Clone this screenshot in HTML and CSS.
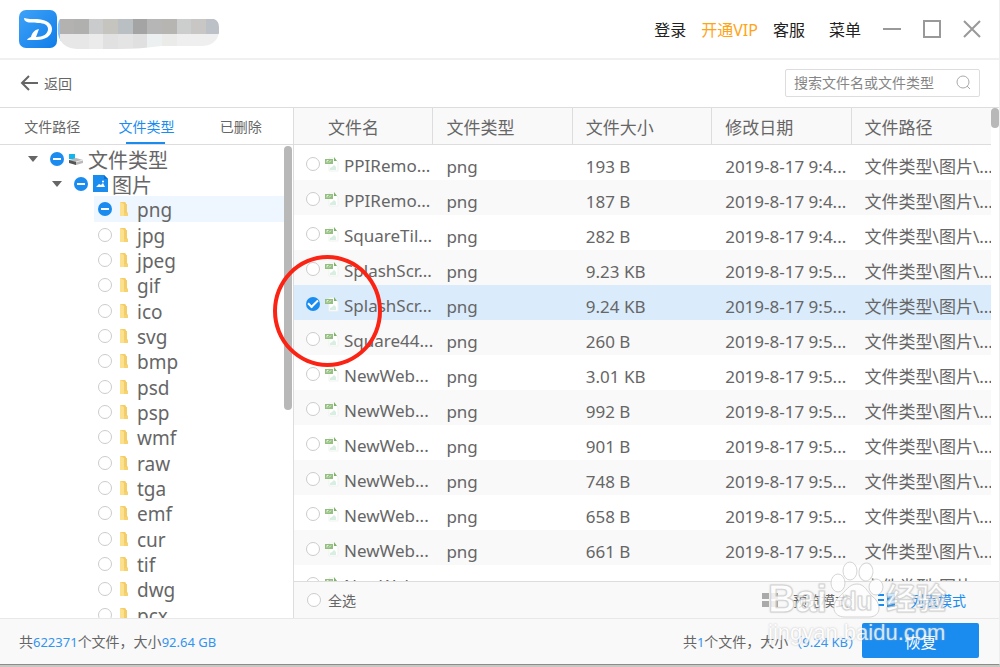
FILE: index.html
```html
<!DOCTYPE html>
<html lang="zh-CN">
<head>
  <meta charset="UTF-8">
  <title>数据恢复</title>
  <link rel="stylesheet" href="styles.css">
</head>
<body>
  <!-- icons used more than once -->
  <svg class="sprite" aria-hidden="true">
    <symbol id="i-folder" viewBox="0 0 10 16">
      <path d="M1 1h5l1 1v1h1v8l1 1v3H1z" fill="#f3cd68"/>
      <path d="M1 1l4 2v12H1z" fill="#fbe08e"/>
      <path d="M5 12h4v3H5z" fill="#f7d271"/>
    </symbol>
    <symbol id="i-png" viewBox="0 0 14 15">
      <path d="M4 1h5l4 4v9H4z" fill="#fff" stroke="#eef3ee"/>
      <path d="M9 0l3 4H9z" fill="#7fb26c"/>
      <path d="M0 2h8v5H0z" fill="#94bf80"/>
      <path d="M2 5.500V3.500h1.500M4 5.500l2-2" stroke="#e6f3df" fill="none"/>
      <path d="M5 13v-2l2-1 2-2 2 2v3z" fill="#d9eee2"/>
    </symbol>
  </svg>

  <div class="window">
    <header class="titlebar">
      <svg class="logo" viewBox="0 0 38 38">
        <defs>
          <linearGradient id="lg" x1="0" y1="0" x2="1" y2="1">
            <stop offset="0" stop-color="#3ea2f8"/>
            <stop offset="1" stop-color="#0f7ce8"/>
          </linearGradient>
        </defs>
        <rect width="38" height="38" rx="7" fill="url(#lg)"/>
        <path d="M5 8c3 1 8 1 13 1 11 1 15 5 15 10 0 7-7 11-15 11H8c1-2 2-2 4-3 1-4 3-7 8-8l-3 8c7 0 12-3 12-8 0-4-4-6-10-6-5-1-9 0-11-1-2-1-3-2-3-4z" fill="#fff"/>
      </svg>
      <svg class="brand" viewBox="0 0 162 30">
        <clipPath id="brandclip"><path d="M3 0h154q5 2 5 8v6q-3 13-18 13h-40q-20 3-42 3H20Q4 29 1 15 0 3 3 0z"/></clipPath>
        <g clip-path="url(#brandclip)">
          <path fill="#8dc2f5" d="M0 0h4v30H0z"/>
          <path fill="#b3b2b1" d="M3 0h14v15H3z"/><path fill="#b0b0af" d="M17 0h15v15H17z"/>
          <path fill="#c9cbcd" d="M32 0h14v15H32z"/><path fill="#c5c4bf" d="M46 0h15v15H46z"/>
          <path fill="#b9bfc3" d="M61 0h15v15H61z"/><path fill="#a4a4a4" d="M76 0h14v15H76z"/>
          <path fill="#b6b6b6" d="M90 0h15v15H90z"/><path fill="#b7b5b2" d="M105 0h15v15h-15z"/>
          <path fill="#cccdcd" d="M120 0h14v15h-14z"/><path fill="#c9c7c5" d="M134 0h15v15h-15z"/>
          <path fill="#bbc1c6" d="M149 0h13v15h-13z"/>
          <path fill="#e7e7e7" d="M3 15h29v15H3z"/><path fill="#ebebeb" d="M32 15h14v15H32z"/>
          <path fill="#e1e1e1" d="M46 15h15v15H46z"/><path fill="#e4e4e4" d="M61 15h15v15H61z"/>
          <path fill="#e0e0e0" d="M76 15h14v15H76z"/><path fill="#edf0f0" d="M90 15h15v15H90z"/>
          <path fill="#ebebea" d="M105 15h15v15h-15z"/><path fill="#efefef" d="M120 15h42v15h-42z"/>
        </g>
      </svg>
      <nav class="menu">
        <a href="#">登录</a>
        <a href="#" class="vip">开通VIP</a>
        <a href="#">客服</a>
      </nav>
      <div class="winbtns">
        <button class="menubtn">菜单</button>
        <button aria-label="最小化"><svg width="18" height="18"><path d="M0 9h18" stroke-width="2"/></svg></button>
        <button aria-label="最大化"><svg width="18" height="18"><path d="M1 1h16v16H1z" stroke-width="2"/></svg></button>
        <button aria-label="关闭"><svg width="18" height="18"><path d="M1 1l16 16M17 1L1 17" stroke-width="2"/></svg></button>
      </div>
    </header>

    <div class="toolbar">
      <button class="back">
        <svg width="18" height="16"><path d="M9 1L2 8l7 7M2 8h16" stroke="#666" stroke-width="2" fill="none"/></svg>
        返回
      </button>
      <div class="search">
        <input type="text" placeholder="搜索文件名或文件类型" aria-label="搜索">
        <svg width="15" height="15"><circle cx="7" cy="7" r="6"/><path d="M11 11l3 3"/></svg>
      </div>
    </div>

    <div class="main">
      <aside class="side">
        <div class="tabs">
          <button class="tab">文件路径</button>
          <button class="tab active">文件类型</button>
          <button class="tab">已删除</button>
        </div>
        <div class="tree-wrap">
          <ul class="tree" id="tree">
            <li class="lv1">
              <span class="arrow"></span>
              <input type="checkbox" class="check part" id="t-all">
              <svg class="ico-disk" viewBox="0 0 15 12"><path d="M0 1h6v5H0z" fill="#13b5ee"/><path d="M0 7l7-2 7 2v3l-7 2-7-3z" fill="#b9b9b9"/><path d="M0 7l7 2v3l-7-2z" fill="#555"/><path d="M7 9l7-2" stroke="#eee"/></svg>
              <label for="t-all">文件类型</label>
            </li>
            <li class="lv2">
              <span class="arrow"></span>
              <input type="checkbox" class="check part" id="t-pic">
              <svg class="ico-pic" viewBox="0 0 15 17"><path d="M0 0h11l4 4v13H0z" fill="#1a8cf0"/><path d="M11 0v4h4z" fill="#0c6fc9"/><path d="M3 12l3-3 2 1 2-2 2 4z" fill="#fff"/><circle cx="10" cy="6.500" r="1" fill="#fff"/></svg>
              <label for="t-pic">图片</label>
            </li>
          </ul>
          <div class="rail"><div class="thumb"></div></div>
        </div>
      </aside>

      <section class="files">
        <div class="list">
          <div class="table-wrap">
            <table>
              <thead>
                <tr><th>文件名</th><th>文件类型</th><th>文件大小</th><th>修改日期</th><th>文件路径</th></tr>
              </thead>
              <tbody id="rows"></tbody>
            </table>
          </div>
          <div class="rail"><div class="thumb short"></div></div>
        </div>
        <div class="viewbar">
          <input type="checkbox" class="check" id="all">
          <label for="all">全选</label>
          <button class="mode">
            <svg width="16" height="14"><path d="M0 0h7v6H0zM9 0h7v6H9zM0 8h7v6H0zM9 8h7v6H9z" fill="#aaa"/></svg>
            预览模式
          </button>
          <button class="mode on">
            <svg width="17" height="14"><path d="M0 1h6v2H0zM0 6h6v2H0zM0 11h6v2H0zM9 0h8v14H9z" fill="#1a8cf0"/><path d="M11 11l4-8" stroke="#fff"/></svg>
            列表模式
          </button>
        </div>
      </section>
    </div>

    <footer class="footer">
      <p>共<b>622371</b>个文件，大小<b>92.64 GB</b></p>
      <p class="picked">共<b>1</b>个文件，大小<span>（<b>9.24 KB</b>）</span></p>
      <button class="recover">恢复</button>
    </footer>

    <div class="ring"></div>
    <div class="mark">
      <div class="mark-top">
        <span class="mark-bai">Bai</span>
        <span class="paw">
          <svg viewBox="0 0 54 58">
            <ellipse cx="8" cy="23" rx="7" ry="9"/>
            <ellipse cx="20" cy="11" rx="7" ry="9"/>
            <ellipse cx="36" cy="12" rx="7" ry="9" transform="rotate(8 36 12)"/>
            <ellipse cx="46" cy="27" rx="7" ry="8"/>
            <path d="M27 24c8 0 10 8 16 13 9 7 8 20-4 20H15C2 57 1 44 9 37c7-6 10-13 18-13z"/>
          </svg>
          <span>du</span>
        </span>
        <span class="mark-jy">经验</span>
      </div>
      <div class="mark-url">jingyan.baidu.com</div>
    </div>
  </div>

  <script>
    // file types under 图片
    const types = ["png", "jpg", "jpeg", "gif", "ico", "svg", "bmp", "psd", "psp", "wmf", "raw", "tga", "emf", "cur", "tif", "dwg", "pcx"];
    const tree = document.getElementById("tree");
    types.forEach((t, i) => {
      const li = document.createElement("li");
      li.className = i === 0 ? "lv3 current" : "lv3";
      li.innerHTML = `<input type="checkbox" class="check${i === 0 ? " part" : ""}" id="t-${t}">
        <svg class="ico-folder"><use href="#i-folder"/></svg><label for="t-${t}">${t}</label>`;
      tree.appendChild(li);
    });

    // name, size, date
    const files = [
      ["PPIRemo...", "193 B", "2019-8-17 9:4..."],
      ["PPIRemo...", "187 B", "2019-8-17 9:4..."],
      ["SquareTil...", "282 B", "2019-8-17 9:4..."],
      ["SplashScr...", "9.23 KB", "2019-8-17 9:5..."],
      ["SplashScr...", "9.24 KB", "2019-8-17 9:5..."],
      ["Square44...", "260 B", "2019-8-17 9:5..."],
      ["NewWeb...", "3.01 KB", "2019-8-17 9:5..."],
      ["NewWeb...", "992 B", "2019-8-17 9:5..."],
      ["NewWeb...", "901 B", "2019-8-17 9:5..."],
      ["NewWeb...", "748 B", "2019-8-17 9:5..."],
      ["NewWeb...", "658 B", "2019-8-17 9:5..."],
      ["NewWeb...", "661 B", "2019-8-17 9:5..."],
      ["NewWeb...", "657 B", "2019-8-17 9:5..."]
    ];
    const selected = 4;
    document.getElementById("rows").innerHTML = files.map((f, i) => `
      <tr class="${i === selected ? "selected" : ""}">
        <td><div class="name">
          <input type="checkbox" class="check" id="f-${i}" ${i === selected ? "checked" : ""}>
          <svg class="ico-png"><use href="#i-png"/></svg>
          <label for="f-${i}">${f[0]}</label>
        </div></td>
        <td>png</td><td>${f[1]}</td><td>${f[2]}</td><td>文件类型\\图片\\...</td>
      </tr>`).join("");
  </script>
</body>
</html>
```
FILE: styles.css
```css
* {
  box-sizing: border-box;
}
body {
  margin: 0;
  font-family: "Noto Sans", "Noto Sans CJK SC", sans-serif;
  font-size: 14px;
  color: #666;
  background: #c9c9c2;
}
button {
  font: inherit;
  color: inherit;
  background: none;
  border: none;
  padding: 0;
  cursor: pointer;
}
a {
  color: inherit;
  text-decoration: none;
}
svg {
  display: block;
  flex: none;
}
.sprite {
  position: absolute;
  width: 0;
  height: 0;
}
.window {
  position: relative;
  display: flex;
  flex-direction: column;
  height: calc(100vh - 2px);
  background: #fff;
  border-right: 1px solid #eee;
  border-bottom: 1px solid #8c8c8c;
  overflow: hidden;
}

/* title bar */
.titlebar {
  display: flex;
  align-items: center;
  flex: none;
  height: 60px;
  padding: 0 18px 0 19px;
  border-bottom: 2px solid #f0f0f0;
  font-size: 16px;
  color: #222;
}
.logo {
  width: 38px;
  height: 38px;
}
.brand {
  width: 162px;
  height: 30px;
  margin-top: 10px;
}
.menu {
  display: flex;
  gap: 15px;
  margin-left: auto;
}
.vip {
  color: #ffa417;
}
.winbtns {
  display: flex;
  align-items: center;
  gap: 22px;
  margin-left: 24px;
}
.winbtns svg {
  stroke: #999;
  fill: none;
}

/* toolbar */
.toolbar {
  display: flex;
  align-items: center;
  justify-content: space-between;
  flex: none;
  height: 48px;
  padding: 0 19px 2px 20px;
  border-bottom: 1px solid #ddd;
}
.back {
  display: flex;
  align-items: center;
  gap: 6px;
}
.search {
  display: flex;
  align-items: center;
  width: 195px;
  height: 28px;
  padding: 0 8px;
  border: 1px solid #ddd;
  border-radius: 2px;
}
.search input {
  flex: 1;
  min-width: 0;
  padding: 0;
  border: none;
  outline: none;
  font: inherit;
}
.search input::placeholder {
  color: #858585;
}
.search svg {
  stroke: #aaa;
  fill: none;
}

.main {
  display: flex;
  flex: 1;
  min-height: 0;
}
.rail {
  flex: none;
  width: 8px;
}
.thumb {
  height: 264px;
  background: #b8b8b8;
  border-radius: 4px;
}
.thumb.short {
  height: 20px;
}

/* round tick boxes */
.check {
  appearance: none;
  flex: none;
  width: 14px;
  height: 14px;
  margin: 0;
  border: 1px solid #ccc;
  border-radius: 50%;
  background: #fff;
}
.check.part {
  border: none;
  background: linear-gradient(#fff, #fff) center / 8px 2px no-repeat #1a8cf0;
}
.check:checked {
  display: grid;
  place-items: center;
  border: none;
  background: #1a8cf0;
}
.check:checked::after {
  content: "";
  width: 8px;
  height: 4px;
  border-left: 2px solid #fff;
  border-bottom: 2px solid #fff;
  transform: rotate(-45deg) translate(1px, -1px);
}

/* left side */
.side {
  display: flex;
  flex-direction: column;
  flex: none;
  width: 294px;
  border-right: 1px solid #ddd;
}
.tabs {
  display: flex;
  flex: none;
  height: 37px;
  padding: 0 5px;
  border-bottom: 1px solid #ddd;
}
.tab {
  position: relative;
  flex: 1;
}
.tab.active {
  color: #1a8cf0;
}
.tab.active::after {
  content: "";
  position: absolute;
  left: 50%;
  bottom: 0;
  width: 39px;
  height: 2px;
  margin-left: -20px;
  background: #1a8cf0;
}
.tree-wrap {
  display: flex;
  flex: 1;
  min-height: 0;
  padding: 1px 1px 0 0;
  overflow: hidden;
}
.tree {
  flex: 1;
  margin: 0;
  padding: 0;
  list-style: none;
  font-size: 19px;
}
.tree li {
  display: flex;
  align-items: center;
  height: 25px;
}
.tree li:nth-child(3n) {
  height: 26px;
}
.tree label {
  padding-top: 3px;
  line-height: 25px;
}
.tree .lv1 {
  margin-left: 28px;
  font-size: 20px;
}
.tree .lv2 {
  margin-left: 52px;
  font-size: 20px;
}
.lv3 {
  margin-left: 94px;
  padding-left: 4px;
}
.lv3 label {
  margin-left: 8px;
}
.current {
  background: #eef6ff;
}
.arrow {
  margin-right: 12px;
  border: 5px solid transparent;
  border-top: 6px solid #666;
  border-bottom: none;
}
.ico-disk {
  width: 15px;
  height: 12px;
  margin: 0 4px 0 5px;
}
.ico-pic {
  width: 15px;
  height: 17px;
  margin: 0 4px 0 5px;
}
.ico-folder {
  width: 10px;
  height: 16px;
  margin-left: 7px;
}

/* file list */
.files {
  display: flex;
  flex-direction: column;
  flex: 1;
  min-width: 0;
}
.list {
  display: flex;
  flex: 1;
  min-height: 0;
  overflow: hidden;
}
.table-wrap {
  flex: 1;
  min-width: 0;
  overflow: hidden;
}
table {
  width: 100%;
  table-layout: fixed;
  border-collapse: separate;
  border-spacing: 0;
}
th {
  height: 37px;
  padding: 3px 0 0 13px;
  background: #f9f9f9;
  border-right: 1px solid #ddd;
  border-bottom: 1px solid #ddd;
  font-size: 17px;
  font-weight: normal;
  line-height: 24px;
  text-align: left;
}
th:first-child {
  padding-left: 34px;
}
th:last-child {
  border-right: none;
}
td {
  height: 35px;
  padding: 8px 0 0 13px;
  font-size: 17px;
  line-height: 24px;
  white-space: nowrap;
}
td:first-child {
  padding: 3px 0 0 12px;
}
tbody tr:nth-child(even) {
  background: #f9f9f9;
}
tbody tr.selected {
  background: #daecfc;
}
.name {
  display: flex;
  align-items: center;
}
.name label {
  margin-left: 5px;
  padding-top: 3px;
}
.ico-png {
  width: 14px;
  height: 15px;
  margin-left: 5px;
}

.viewbar {
  display: flex;
  align-items: center;
  flex: none;
  height: 37px;
  padding: 0 33px 0 13px;
  background: #f9f9f9;
  border-top: 1px solid #ddd;
}
.viewbar label {
  margin: 0 auto 0 7px;
}
.mode {
  display: flex;
  align-items: center;
  gap: 15px;
  margin-left: 29px;
}
.mode.on {
  color: #1a8cf0;
}

/* footer */
.footer {
  display: flex;
  align-items: center;
  flex: none;
  height: 46px;
  padding: 0 20px 2px 19px;
  background: #f9f9f9;
  border-top: 1px solid #e8e8e8;
}
.footer p {
  margin: 0;
}
.footer b {
  font-size: 13px;
  font-weight: normal;
  color: #3394f0;
}
.footer .picked {
  margin-left: auto;
  padding-left: 20px;
}
.picked span {
  color: #3394f0;
}
.recover {
  width: 117px;
  height: 35px;
  background: #1a8cf0;
  border-radius: 2px;
  color: #fff;
  font-size: 16px;
}

/* red ring round the ticked file */
.ring {
  position: absolute;
  left: 273px;
  top: 255px;
  width: 109px;
  height: 112px;
  border: 4px solid #fb2414;
  border-radius: 50%;
  pointer-events: none;
}

/* watermark */
.mark {
  position: absolute;
  right: 53px;
  bottom: 16px;
  width: 178px;
  color: #fff;
  font-family: "Liberation Sans", "Noto Sans CJK SC", sans-serif;
  text-shadow: 0 0 2px #aaa;
  opacity: 0.8;
  pointer-events: none;
}
.mark-top {
  display: flex;
  align-items: flex-end;
  justify-content: space-between;
  font-weight: bold;
  -webkit-text-stroke: 1px #ccc;
}
.mark-bai {
  font-size: 38px;
  line-height: 38px;
}
.paw {
  display: grid;
  place-items: end center;
}
.paw > * {
  grid-area: 1 / 1;
}
.paw svg {
  width: 54px;
  height: 58px;
  fill: #fff;
  stroke: #ccc;
}
.paw span {
  font-size: 26px;
  line-height: 34px;
}
.mark-jy {
  font-size: 30px;
  line-height: 38px;
}
.mark-url {
  font-size: 22px;
  line-height: 30px;
}
```
